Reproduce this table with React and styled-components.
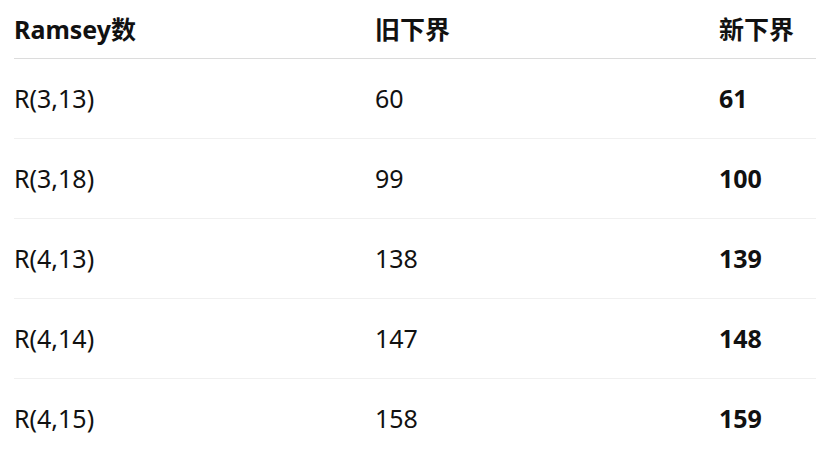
import React from "react";
import styled, { createGlobalStyle } from "styled-components";

const GlobalStyle = createGlobalStyle`
  html, body {
    margin: 0;
    padding: 0;
    background: #ffffff;
  }
  body {
    font-family: "Noto Sans", "Noto Sans CJK SC", sans-serif;
    color: #111111;
  }
`;

const rows = [
  { name: "R(3,13)", oldBound: 60, newBound: 61 },
  { name: "R(3,18)", oldBound: 99, newBound: 100 },
  { name: "R(4,13)", oldBound: 138, newBound: 139 },
  { name: "R(4,14)", oldBound: 147, newBound: 148 },
  { name: "R(4,15)", oldBound: 158, newBound: 159 },
];

function App() {
  return (
    <>
      <GlobalStyle />
      <Wrapper>
        <Table>
          <HeadRow>
            <Cell $bold>Ramsey数</Cell>
            <Cell $bold>旧下界</Cell>
            <Cell $bold>新下界</Cell>
          </HeadRow>
          {rows.map((r) => (
            <Row key={r.name}>
              <Cell>{r.name}</Cell>
              <Cell>{r.oldBound}</Cell>
              <Cell $bold>{r.newBound}</Cell>
            </Row>
          ))}
        </Table>
      </Wrapper>
    </>
  );
}

const Wrapper = styled.main`
  padding: 0 0 0 14px;
  overflow: hidden;
`;

const Table = styled.div`
  width: 830px;
`;

const HeadRow = styled.div`
  display: grid;
  grid-template-columns: 361px 344px 1fr;
  align-items: center;
  height: 58px;
  border-bottom: 1px solid #dcdcdc;
`;

const Row = styled.div`
  display: grid;
  grid-template-columns: 361px 344px 1fr;
  align-items: center;
  height: 79px;
  border-bottom: 1px solid #f0f0f0;

  &:last-child {
    border-bottom: none;
  }
`;

const Cell = styled.div`
  font-size: 25px;
  font-weight: ${(p) => (p.$bold ? 700 : 400)};
  line-height: 1.3;
  white-space: nowrap;
`;

export default App;
